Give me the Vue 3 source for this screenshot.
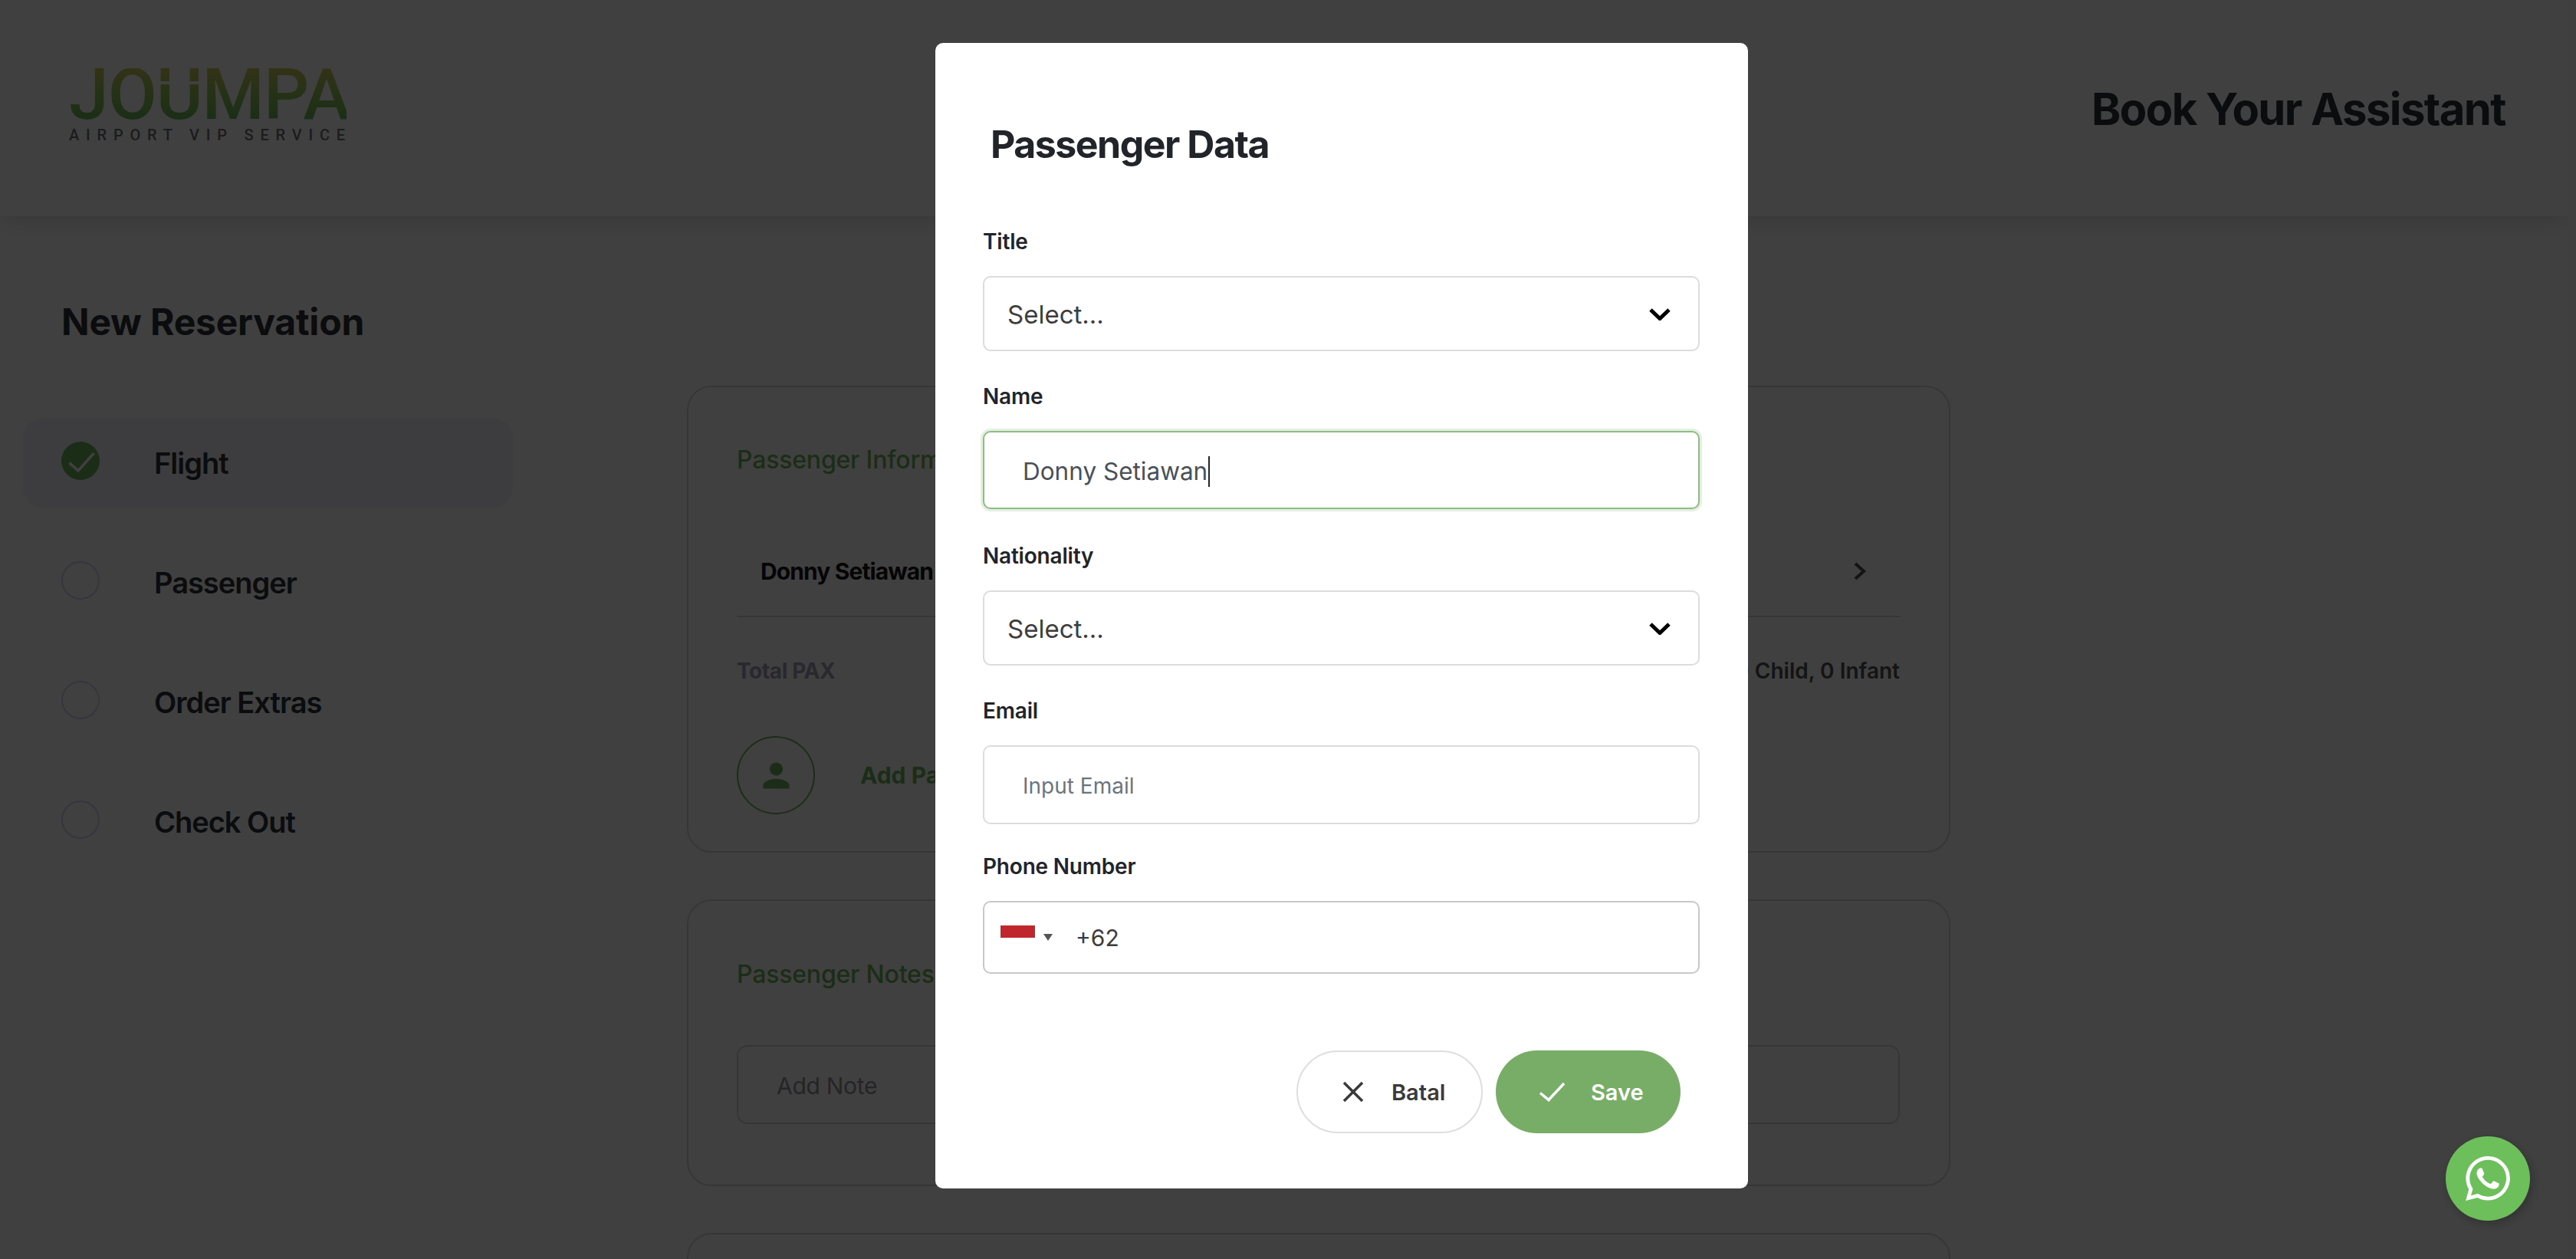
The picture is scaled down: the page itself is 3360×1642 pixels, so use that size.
<script setup>
const steps = [
  { label: 'Flight', done: true },
  { label: 'Passenger', done: false },
  { label: 'Order Extras', done: false },
  { label: 'Check Out', done: false }
]
</script>

<template>
  <div class="page">
    <header class="topbar">
      <div class="logo">
        <div class="logo-word">JOUMPA</div>
        <div class="logo-sub">AIRPORT VIP SERVICE</div>
      </div>
      <div class="topbar-title">Book Your Assistant</div>
    </header>

    <main class="main">
      <h1 class="heading">New Reservation</h1>
      <div class="columns">
        <nav class="steps">
          <div v-for="s in steps" :key="s.label" class="step" :class="{ active: s.done }">
            <span class="dot" :class="{ done: s.done }">
              <svg v-if="s.done" width="50" height="50" viewBox="0 0 50 50" fill="none">
                <path d="M10.4 27.6 22 37.9 42.6 15" stroke="#fff" stroke-width="3.5" />
              </svg>
            </span>
            <span class="step-label">{{ s.label }}</span>
          </div>
        </nav>

        <section class="cards">
          <article class="card">
            <h2 class="card-title">Passenger Information</h2>
            <div class="pax-row">
              <span class="pax-name">Donny Setiawan</span>
              <svg width="16" height="24" viewBox="0 0 16 24" fill="none">
                <path d="M2 2 13 12 2 22" stroke="#505050" stroke-width="4" />
              </svg>
            </div>
            <div class="total-row">
              <span class="total-label">Total PAX</span>
              <span class="total-value">1 Adult, 0 Child, 0 Infant</span>
            </div>
            <div class="add-row">
              <span class="avatar">
                <svg width="51" height="51" viewBox="0 0 24 24">
                  <path fill="#72b45c" d="M12 12c2.21 0 4-1.79 4-4s-1.79-4-4-4-4 1.79-4 4 1.79 4 4 4zm0 2c-2.67 0-8 1.34-8 4v2h16v-2c0-2.66-5.33-4-8-4z" />
                </svg>
              </span>
              <span class="add-label">Add Passenger</span>
            </div>
          </article>

          <article class="card notes">
            <h2 class="card-title">Passenger Notes</h2>
            <div class="note-box"><span class="note-text">Add Note</span></div>
          </article>

          <article class="card empty"></article>
        </section>
      </div>
    </main>
  </div>

  <div class="overlay">
    <div class="modal">
      <h2 class="modal-title">Passenger Data</h2>

      <div class="field">
        <label class="label">Title</label>
        <div class="control select">
          <span class="select-text">Select...</span>
          <svg class="chev" width="28" height="16" viewBox="0 0 28 16" fill="none">
            <path d="M2 2 14 13.5 26 2" stroke="#000" stroke-width="5" />
          </svg>
        </div>
      </div>

      <div class="field field-name">
        <label class="label">Name</label>
        <div class="control text focus">
          <span class="value">Donny Setiawan</span><span class="caret"></span>
        </div>
      </div>

      <div class="field">
        <label class="label">Nationality</label>
        <div class="control select">
          <span class="select-text">Select...</span>
          <svg class="chev" width="28" height="16" viewBox="0 0 28 16" fill="none">
            <path d="M2 2 14 13.5 26 2" stroke="#000" stroke-width="5" />
          </svg>
        </div>
      </div>

      <div class="field field-email">
        <label class="label">Email</label>
        <div class="control text tall">
          <span class="placeholder">Input Email</span>
        </div>
      </div>

      <div class="field last">
        <label class="label">Phone Number</label>
        <div class="control phone">
          <span class="flag"></span>
          <span class="arrow"></span>
          <span class="dial">+62</span>
        </div>
      </div>

      <div class="actions">
        <button class="btn cancel">
          <svg width="28" height="28" viewBox="0 0 28 28" fill="none">
            <path d="M2 2 26 26M26 2 2 26" stroke="#3a3a3a" stroke-width="3.5" />
          </svg>
          <span>Batal</span>
        </button>
        <button class="btn save">
          <svg width="36" height="26" viewBox="0 0 36 26" fill="none">
            <path d="M2 14.5 13 23.5 33 2" stroke="#fff" stroke-width="3.5" />
          </svg>
          <span>Save</span>
        </button>
      </div>
    </div>
  </div>

  <a class="whatsapp">
    <svg width="58" height="58" viewBox="0 0 24 24">
      <path fill="#fff" d="M17.472 14.382c-.297-.149-1.758-.867-2.03-.967-.273-.099-.471-.148-.67.15-.197.297-.767.966-.94 1.164-.173.199-.347.223-.644.075-.297-.15-1.255-.463-2.39-1.475-.883-.788-1.48-1.761-1.653-2.059-.173-.297-.018-.458.13-.606.134-.133.298-.347.446-.52.149-.174.198-.298.298-.497.099-.198.05-.371-.025-.52-.075-.149-.669-1.612-.916-2.207-.242-.579-.487-.5-.669-.51-.173-.008-.371-.01-.57-.01-.198 0-.52.074-.792.372-.272.297-1.04 1.016-1.04 2.479 0 1.462 1.065 2.875 1.213 3.074.149.198 2.096 3.2 5.077 4.487.709.306 1.262.489 1.694.625.712.227 1.36.195 1.871.118.571-.085 1.758-.719 2.006-1.413.248-.694.248-1.289.173-1.413-.074-.124-.272-.198-.57-.347m-5.421 7.403h-.004a9.87 9.87 0 01-5.031-1.378l-.361-.214-3.741.982.998-3.648-.235-.374a9.86 9.86 0 01-1.51-5.26c.001-5.45 4.436-9.884 9.888-9.884 2.64 0 5.122 1.03 6.988 2.898a9.825 9.825 0 012.893 6.994c-.003 5.45-4.437 9.884-9.885 9.884m8.413-18.297A11.815 11.815 0 0012.05 0C5.495 0 .16 5.335.157 11.892c0 2.096.547 4.142 1.588 5.945L.057 24l6.305-1.654a11.882 11.882 0 005.683 1.448h.005c6.554 0 11.89-5.335 11.893-11.893a11.821 11.821 0 00-3.48-8.413z" />
    </svg>
  </a>
</template>

<style>
html, body { margin: 0; overflow: hidden; background: #fcfcfc; }
</style>

<style scoped>
* { box-sizing: border-box; }

.page {
  width: 3350px;
  height: 1642px;
  overflow: hidden;
  background: #fff;
  font-family: Inter, "Liberation Sans", sans-serif;
  color: #2c3038;
}

.topbar {
  height: 282px;
  background: #fff;
  box-shadow: 0 4px 30px rgba(0, 0, 0, 0.15);
  display: flex;
  justify-content: space-between;
  align-items: flex-start;
  padding: 0 82px 0 90px;
  position: relative;
}

.logo { padding-top: 89px; width: 362px; }
.logo-word {
  position: relative;
  font-family: Roboto, sans-serif;
  font-weight: 500;
  font-size: 93px;
  line-height: 70px;
  letter-spacing: -1px;
  background: linear-gradient(180deg, #c4c85a 5%, #66bc5a 95%);
  -webkit-background-clip: text;
  background-clip: text;
  color: transparent;
  white-space: nowrap;
}
.logo-word::after {
  content: "";
  position: absolute;
  left: 116px;
  width: 62px;
  top: 17px;
  height: 4px;
  background: #fff;
}
.logo-sub {
  font-family: Roboto, sans-serif;
  font-weight: 500;
  font-size: 20px;
  line-height: 22px;
  letter-spacing: 8.8px;
  color: #707070;
  white-space: nowrap;
  margin-top: 6px;
}

.topbar-title {
  font-size: 58px;
  line-height: 70px;
  font-weight: 700;
  letter-spacing: -1.6px;
  margin-top: 107px;
  white-space: nowrap;
}

.main { padding: 108px 0 0 30px; }
.heading {
  margin: 0 0 53px 50px;
  font-size: 48px;
  line-height: 60px;
  font-weight: 700;
  letter-spacing: -0.2px;
}

.columns { display: flex; align-items: flex-start; gap: 227px; }

.steps {
  width: 639px;
  padding-top: 42px;
  display: flex;
  flex-direction: column;
  gap: 39px;
}
.step {
  height: 117px;
  border-radius: 26px;
  padding-left: 50px;
  display: flex;
  align-items: center;
  gap: 71px;
}
.step.active { background: #f3f3fa; }
.dot {
  width: 50px;
  height: 50px;
  border-radius: 50%;
  border: 2px solid #d4d4f0;
  flex: none;
  margin-top: -5px;
}
.dot.done { border: 0; background: #72b45c; }
.dot svg { display: block; }
.step-label { font-size: 38px; font-weight: 600; line-height: 50px; letter-spacing: -1px; }

.cards { width: 1648px; display: flex; flex-direction: column; gap: 61px; }
.card {
  border: 2px solid #d8d8d8;
  border-radius: 32px;
  background: #fff;
  padding: 72px 64px 48px 63px;
}
.card-title {
  margin: 0;
  font-size: 32px;
  line-height: 46px;
  font-weight: 500;
  letter-spacing: -0.2px;
  color: #72b45c;
  white-space: nowrap;
}

.pax-row {
  margin-top: 60px;
  height: 122px;
  border-bottom: 2px solid #d8d8d8;
  padding: 4px 44px 0 31px;
  display: flex;
  align-items: center;
  justify-content: space-between;
}
.pax-name { font-size: 30px; font-weight: 700; letter-spacing: -0.9px; color: #141414; }

.total-row {
  margin-top: 50px;
  height: 40px;
  display: flex;
  align-items: center;
  justify-content: space-between;
}
.total-label { font-size: 28px; font-weight: 700; letter-spacing: -0.4px; color: #a0a0b8; }
.total-value { font-size: 28px; font-weight: 600; color: #505050; }

.add-row { margin-top: 65px; display: flex; align-items: center; gap: 59px; }
.avatar {
  width: 102px;
  height: 102px;
  border-radius: 50%;
  border: 2px solid #72b45c;
  display: flex;
  align-items: center;
  justify-content: center;
}
.add-label { font-size: 30px; font-weight: 700; color: #72b45c; }

.notes { padding-top: 73px; padding-bottom: 79px; }
.note-box {
  margin-top: 69px;
  height: 103px;
  border: 2px solid #d8d8d8;
  border-radius: 14px;
  padding: 3px 0 0 50px;
  display: flex;
  align-items: center;
  font-size: 30px;
  letter-spacing: -0.3px;
  color: #94949c;
}
.empty { height: 320px; }

.overlay {
  position: fixed;
  inset: 0;
  background: rgba(0, 0, 0, 0.75);
  padding: 56px 0 0 1220px;
  font-family: Inter, "Liberation Sans", sans-serif;
}

.modal {
  width: 1060px;
  height: 1494px;
  background: #fff;
  border-radius: 10px;
  padding: 96px 63px 0 62px;
}
.modal-title {
  margin: 0 0 71px 10px;
  font-size: 50px;
  line-height: 72px;
  font-weight: 700;
  letter-spacing: -1.5px;
  color: #212529;
}

.field { margin-bottom: 39px; }
.field.field-name { margin-bottom: 41px; }
.field.field-email { margin-bottom: 35px; }
.field.last { margin-bottom: 0; }
.label {
  display: block;
  font-size: 28px;
  line-height: 40px;
  font-weight: 600;
  letter-spacing: -0.2px;
  color: #212529;
  margin-bottom: 25px;
}

.control {
  border: 2px solid #dcdcdc;
  border-radius: 10px;
  display: flex;
  align-items: center;
  background: #fff;
  color: #495057;
}
.select { height: 98px; padding: 2px 36px 0 30px; justify-content: space-between; }
.select-text { font-size: 33px; color: #3d3d3d; }
.chev { margin-top: -1px; }
.text { height: 102px; padding: 3px 0 0 50px; font-size: 31.5px; }
.text.tall { height: 103px; }
.focus {
  border-color: #8fbc82;
  box-shadow: 0 0 0 3px rgba(119, 173, 103, 0.2);
}
.caret { width: 2px; height: 40px; background: #212529; margin-left: 1px; }
.placeholder { font-size: 28px; color: #6c757d; }

.phone {
  height: 95px;
  border-color: #c8c8c8;
  padding-left: 21px;
  font-size: 30px;
}
.flag {
  width: 45px;
  height: 32px;
  background: linear-gradient(180deg, #c0272d 50%, #fff 50%);
  flex: none;
}
.arrow {
  margin-left: 11px;
  border-left: 6px solid transparent;
  border-right: 6px solid transparent;
  border-top: 9px solid #555;
  flex: none;
}
.dial { margin-left: 30px; color: #3d3d3d; }

.actions {
  display: flex;
  justify-content: flex-end;
  gap: 17px;
  margin-top: 100px;
  padding-right: 25px;
}
.btn {
  height: 108px;
  border-radius: 54px;
  display: flex;
  align-items: center;
  font-family: inherit;
  font-size: 29px;
  font-weight: 600;
  cursor: pointer;
}
.cancel {
  width: 243px;
  background: #fff;
  border: 2px solid #dedede;
  color: #3a3a3a;
  padding: 0 0 0 58px;
  gap: 36px;
}
.save {
  width: 241px;
  background: #77ad67;
  border: 0;
  color: #fff;
  padding: 0 0 0 56px;
  gap: 32px;
}

.whatsapp {
  position: fixed;
  left: 3190px;
  top: 1482px;
  width: 110px;
  height: 110px;
  border-radius: 50%;
  background: #6dbf5b;
  box-shadow: 3px 4px 14px rgba(0, 0, 0, 0.25);
  display: flex;
  align-items: center;
  justify-content: center;
}
</style>
